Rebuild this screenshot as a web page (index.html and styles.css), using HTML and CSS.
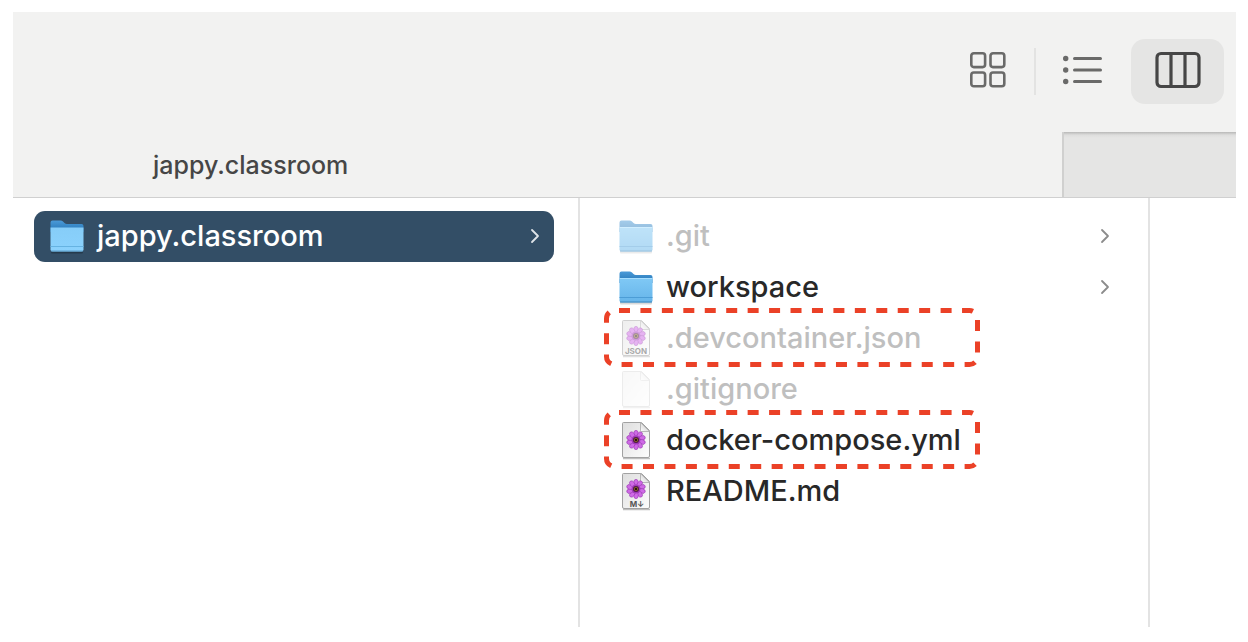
FILE: index.html
```html
<!DOCTYPE html>
<html lang="en">
<head>
<meta charset="utf-8">
<title>jappy.classroom</title>
<link rel="stylesheet" href="styles.css">
</head>
<body>
<svg class="defs" aria-hidden="true">
  <defs>
    <linearGradient id="front" x1="0" y1="0" x2="0" y2="1">
      <stop offset="0" stop-color="#7fc8f5"/><stop offset="1" stop-color="#66b5ea"/>
    </linearGradient>
    <linearGradient id="front-light" x1="0" y1="0" x2="0" y2="1">
      <stop offset="0" stop-color="#86cdf8"/><stop offset="1" stop-color="#8bd2fd"/>
    </linearGradient>
    <linearGradient id="back" x1="0" y1="0" x2="0" y2="1">
      <stop offset="0" stop-color="#4a9ad8"/><stop offset="1" stop-color="#2474b4"/>
    </linearGradient>
    <linearGradient id="paper" x1="0" y1="0" x2="1" y2="1">
      <stop offset="0" stop-color="#dedede"/><stop offset="1" stop-color="#fdfdfd"/>
    </linearGradient>
    <linearGradient id="fold" x1="0" y1="1" x2="1" y2="0">
      <stop offset="0" stop-color="#ffffff"/><stop offset="1" stop-color="#bdbdbd"/>
    </linearGradient>
    <symbol id="folder" viewBox="0 0 34 36">
      <path d="M1 33h32v1.500a1 1 0 0 1-1 1H2a1 1 0 0 1-1-1z" fill="#000" opacity=".15"/>
      <path d="M.5 4.500Q.5 2.500 2.500 2.500H10.500Q12 2.500 13 3.500L14.500 5Q15.500 6 17 6H31.500Q33.500 6 33.500 8V14H.5z" fill="url(#back)"/>
      <path d="M.5 9.500H33.500V31.500Q33.500 33.500 31.500 33.500H2.500Q.5 33.500 .5 31.500z" fill="url(#front)"/>
      <path d="M.5 9.500H33.500" stroke="#a5deff" stroke-width="1"/>
      <path d="M.5 28.500H33.500" stroke="#4c9dd6" stroke-width="1"/>
      <path d="M1 33H33" stroke="#3c86bc" stroke-width="1"/>
    </symbol>
    <symbol id="folder-light" viewBox="0 0 34 36">
      <path d="M1 33h32v1.500a1 1 0 0 1-1 1H2a1 1 0 0 1-1-1z" fill="#000" opacity=".25"/>
      <path d="M.5 4.500Q.5 2.500 2.500 2.500H10.500Q12 2.500 13 3.500L14.500 5Q15.500 6 17 6H31.500Q33.500 6 33.500 8V14H.5z" fill="url(#back)"/>
      <path d="M.5 9.500H33.500V31.500Q33.500 33.500 31.500 33.500H2.500Q.5 33.500 .5 31.500z" fill="url(#front-light)"/>
      <path d="M.5 28.500H33.500" stroke="#66b3e2" stroke-width="1"/>
      <path d="M1 33H33" stroke="#5c9fcb" stroke-width="1"/>
    </symbol>
    <symbol id="page" viewBox="0 0 34 40">
      <path d="M4 38.500H31" stroke="#000" stroke-width="1.500" opacity=".25"/>
      <path d="M4.500 2.500H22.500L30.500 10.500V36Q30.500 37.500 29 37.500H5Q3.500 37.500 3.500 36V3.500Q3.500 2.500 4.500 2.500z" fill="url(#paper)" stroke="#a2a2a2"/>
      <path d="M21.500 2.500V10.500Q21.500 11.500 22.500 11.500H30.500z" fill="url(#fold)" stroke="#a8a8a8" stroke-width=".8"/>
    </symbol>
    <symbol id="flower" viewBox="-10 -10 20 20">
      <g fill="#cf6ae6" stroke="#8d2fa6" stroke-width=".5">
        <ellipse cy="-6.200" rx="2.300" ry="3.500"/>
        <ellipse cy="-6.200" rx="2.300" ry="3.500" transform="rotate(36)"/>
        <ellipse cy="-6.200" rx="2.300" ry="3.500" transform="rotate(72)"/>
        <ellipse cy="-6.200" rx="2.300" ry="3.500" transform="rotate(108)"/>
        <ellipse cy="-6.200" rx="2.300" ry="3.500" transform="rotate(144)"/>
        <ellipse cy="-6.200" rx="2.300" ry="3.500" transform="rotate(180)"/>
        <ellipse cy="-6.200" rx="2.300" ry="3.500" transform="rotate(216)"/>
        <ellipse cy="-6.200" rx="2.300" ry="3.500" transform="rotate(252)"/>
        <ellipse cy="-6.200" rx="2.300" ry="3.500" transform="rotate(288)"/>
        <ellipse cy="-6.200" rx="2.300" ry="3.500" transform="rotate(324)"/>
      </g>
      <circle r="4.500" fill="#a03bb8"/>
      <circle r="3" fill="#4a1c40"/>
      <circle r="1.700" fill="#251712" stroke="#a8752c" stroke-width=".7"/>
    </symbol>
    <symbol id="chevron" viewBox="0 0 10 16">
      <path d="M2 2L8 8L2 14" fill="none" stroke="currentColor" stroke-width="1.800" stroke-linecap="round" stroke-linejoin="round"/>
    </symbol>
    <symbol id="outline" viewBox="0 0 376 59">
      <rect x="2.500" y="2.500" width="371" height="54" rx="8" fill="none" stroke="#eb4127" stroke-width="5" stroke-dasharray="11 10.440" stroke-dashoffset="-4.500"/>
    </symbol>
  </defs>
</svg>
<main class="window">
  <header class="toolbar">
    <button class="view" aria-label="Icons">
      <svg width="38" height="38" viewBox="0 0 38 38" fill="none" stroke="#6a6a69" stroke-width="2.600">
        <rect x="2.300" y="2.300" width="13.800" height="13.800" rx="2.500"/><rect x="21.500" y="2.300" width="13.800" height="13.800" rx="2.500"/>
        <rect x="2.300" y="21.500" width="13.800" height="13.800" rx="2.500"/><rect x="21.500" y="21.500" width="13.800" height="13.800" rx="2.500"/>
      </svg>
    </button>
    <span class="separator"></span>
    <button class="view" aria-label="List">
      <svg width="40" height="38" viewBox="0 0 40 38">
        <g fill="#6a6a69"><circle cx="2.700" cy="7.500" r="2.700"/><circle cx="2.700" cy="19" r="2.700"/><circle cx="2.700" cy="30.500" r="2.700"/></g>
        <path d="M11.500 7.500H37.500M11.500 19H37.500M11.500 30.500H37.500" stroke="#6a6a69" stroke-width="3" stroke-linecap="round"/>
      </svg>
    </button>
    <button class="view view-active" aria-label="Columns" aria-pressed="true">
      <svg width="46" height="38" viewBox="0 0 46 38" fill="none" stroke="#464646" stroke-width="3.200">
        <rect x="2" y="2.500" width="42" height="33" rx="4"/><path d="M16 2.500V35.500M30 2.500V35.500"/>
      </svg>
    </button>
  </header>
  <nav class="tabs">
    <button class="tab tab-active">jappy.classroom</button>
    <button class="tab tab-rest" aria-label="Other tab"></button>
  </nav>
  <div class="columns">
    <ul class="column column-root">
      <li><button class="item item-selected">
        <svg class="icon"><use href="#folder-light"/></svg><span class="name">jappy.classroom</span><svg class="chevron"><use href="#chevron"/></svg>
      </button></li>
    </ul>
    <ul class="column column-files">
      <li><button class="item item-hidden">
        <svg class="icon"><use href="#folder"/></svg><span class="name">.git</span><svg class="chevron"><use href="#chevron"/></svg>
      </button></li>
      <li><button class="item">
        <svg class="icon"><use href="#folder"/></svg><span class="name">workspace</span><svg class="chevron"><use href="#chevron"/></svg>
      </button></li>
      <li class="marked"><button class="item item-hidden">
        <svg class="icon icon-file" viewBox="0 0 34 40"><use href="#page"/><use href="#flower" x="7" y="8" width="20" height="20"/><text class="badge" x="17" y="36">JSON</text></svg><span class="name">.devcontainer.json</span>
      </button><svg class="outline"><use href="#outline"/></svg></li>
      <li><button class="item item-hidden">
        <svg class="icon icon-file icon-blank" viewBox="0 0 34 40"><use href="#page"/></svg><span class="name">.gitignore</span>
      </button></li>
      <li class="marked"><button class="item">
        <svg class="icon icon-file" viewBox="0 0 34 40"><use href="#page"/><use href="#flower" x="7" y="10" width="20" height="20"/></svg><span class="name">docker-compose.yml</span>
      </button><svg class="outline"><use href="#outline"/></svg></li>
      <li><button class="item">
        <svg class="icon icon-file" viewBox="0 0 34 40"><use href="#page"/><use href="#flower" x="7" y="8" width="20" height="20"/><text class="badge" x="18" y="36">M↓</text></svg><span class="name">README.md</span>
      </button></li>
    </ul>
    <div class="column-preview"></div>
  </div>
</main>
</body>
</html>
```
FILE: styles.css
```css
* { box-sizing: border-box; }
body {
  margin: 0;
  min-height: 100vh;
  padding: 12px 12px 15px 13px;
  display: flex;
  background: #fff;
  font-family: Inter, "Liberation Sans", sans-serif;
  font-weight: 450;
  color: #282828;
}
button {
  border: 0;
  padding: 0;
  background: none;
  font: inherit;
  color: inherit;
}
.defs { position: absolute; width: 0; height: 0; }
.window { flex: 1; display: flex; flex-direction: column; }

.toolbar {
  height: 120px;
  padding: 0 12px 2px 0;
  display: flex;
  align-items: center;
  justify-content: flex-end;
  background: #f2f2f1;
}
.view {
  width: 93px;
  height: 65px;
  padding-bottom: 2px;
  border-radius: 14px;
  display: grid;
  place-items: center;
}
.view-active { margin-left: 2px; background: #e5e5e4; }
.separator { width: 2px; height: 47px; background: #e3e3e2; }

.tabs {
  height: 66px;
  display: grid;
  grid-template-columns: 1049fr 174fr;
  background: #f2f2f1;
  border-bottom: 1px solid #d0d0d0;
}
.tab { font-size: 25px; color: #464646; text-align: left; }
.tab-active { padding-left: 140px; }
.tab-rest {
  background: linear-gradient(#b8b8b7, #dededd 3px, #e5e5e4 6px);
  border-left: 2px solid #d0d0cf;
}

.columns {
  flex: 1;
  display: grid;
  grid-template-columns: 567fr 570fr 86fr;
}
.column {
  margin: 0;
  padding: 13px 24px 0 21px;
  list-style: none;
  border-right: 2px solid #e3e3e3;
}
.column-files { padding-left: 23px; }

.item {
  width: 100%;
  height: 51px;
  padding: 0 14px 2px 16px;
  display: flex;
  align-items: center;
  gap: 13px;
  border-radius: 11px;
  font-size: 29px;
  text-align: left;
}
.item-selected { background: #334e66; color: #fff; font-weight: 500; }
.name { flex: 1; }
.item-hidden .name { color: #bfbfbf; }
.item-hidden .icon { opacity: 0.5; }
.item-hidden .icon-blank { opacity: 0.2; }
.icon { width: 34px; height: 36px; flex: none; }
.icon-file { height: 40px; }
.badge { font-size: 8px; font-weight: 700; fill: #555; text-anchor: middle; }
.chevron { width: 10px; height: 16px; flex: none; color: #8c8c8c; }
.item-selected .chevron { color: #dfe4e8; }

.marked { position: relative; }
.outline {
  position: absolute;
  top: -5px;
  left: 1px;
  width: 376px;
  height: 59px;
  pointer-events: none;
}
```
